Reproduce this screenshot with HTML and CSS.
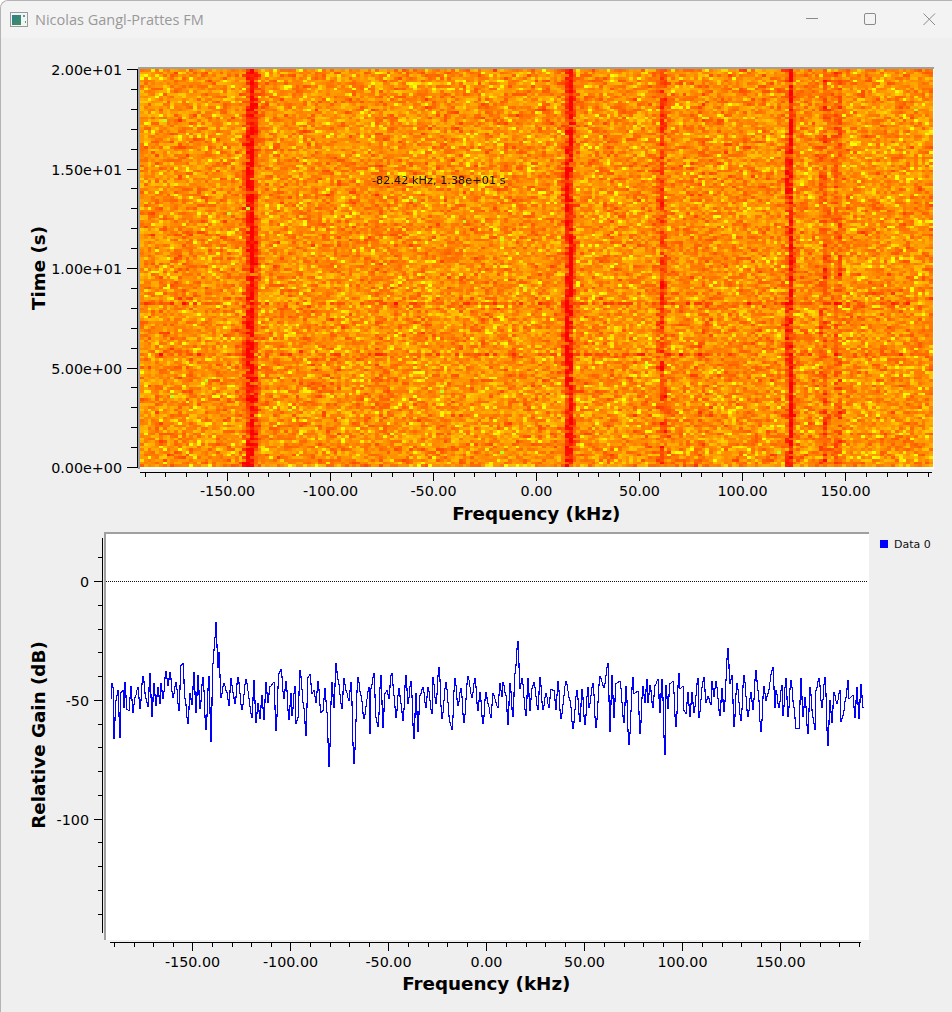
FILE: index.html
```html
<!DOCTYPE html>
<html lang="en">
<head>
  <meta charset="UTF-8" />
  <title>Nicolas Gangl-Prattes FM</title>
  <link rel="stylesheet" href="styles.css">
</head>
<body>
  <div class="window">
    <div class="titlebar">
      <svg class="app-icon" width="18" height="15" viewBox="0 0 18 15">
        <defs>
          <linearGradient id="iconFill" x1="0" y1="0" x2="1" y2="1">
            <stop offset="0" stop-color="#2f7f8f" />
            <stop offset="1" stop-color="#3f8f5f" />
          </linearGradient>
        </defs>
        <rect x="0.5" y="0.5" width="17" height="14" fill="#f4f4f4" stroke="#9a9a9a" />
        <rect x="2" y="3" width="9" height="10" fill="url(#iconFill)" />
        <rect x="13" y="3" width="2" height="2" fill="#4fa0b0" />
        <rect x="15" y="9" width="1" height="2" fill="#3fae7f" />
      </svg>
      <span class="title-text">Nicolas Gangl-Prattes FM</span>
      <div class="controls">
        <svg width="14" height="14" viewBox="0 0 14 14"><path d="M1 6.5H13" class="ctl" /></svg>
        <svg width="14" height="14" viewBox="0 0 14 14"><rect x="1.5" y="1.5" width="11" height="11" rx="1.5" class="ctl" /></svg>
        <svg class="ctl-close" width="14" height="14" viewBox="0 0 14 14"><path d="M1.5 1.5L13 13M13 1.5L1.5 13" class="ctl" /></svg>
      </div>
    </div>

    <div class="plot plot-top">
      <svg id="top-y" class="axis-y"></svg>
      <div class="frame">
        <canvas id="waterfall" width="793" height="398"></canvas>
        <span class="cursor-label">-82.42 kHz, 1.38e+01 s</span>
      </div>
      <svg id="top-x" class="axis-x"></svg>
    </div>

    <div class="plot plot-bottom">
      <svg id="bottom-y" class="axis-y"></svg>
      <div class="frame">
        <svg id="trace" class="trace"></svg>
      </div>
      <div class="legend">
        <span class="swatch"></span>
        <span>Data 0</span>
      </div>
      <svg id="bottom-x" class="axis-x"></svg>
    </div>
  </div>

  <script src="script.js"></script>
</body>
</html>
```

FILE: styles.css
```css
* {
  box-sizing: border-box;
}
html, body {
  margin: 0;
  height: 100%;
  background: #fff;
}
body {
  font-family: "DejaVu Sans", sans-serif;
  overflow: hidden;
}
.window {
  height: 1012px;
  background: #efefef;
  border-top: 1px solid #b4b4b4;
  border-left: 1px solid #b4b4b4;
  border-top-left-radius: 8px;
}
.titlebar {
  height: 37px;
  display: flex;
  align-items: center;
  padding-left: 9px;
  background: #f3f3f3;
  border-top-left-radius: 8px;
}
.app-icon {
  margin-right: 7px;
}
.title-text {
  font-family: "Open Sans", sans-serif;
  font-size: 14.5px;
  color: #999;
}
.controls {
  margin-left: auto;
  margin-bottom: 2px;
  display: flex;
  gap: 44px;
  padding-right: 16px;
  margin-right: 1px;
}
.ctl-close {
  margin-left: 1px;
  margin-right: -1px;
}
.ctl {
  fill: none;
  stroke: #8a8a8a;
  stroke-width: 1;
}

.plot {
  display: grid;
}
.plot-top {
  grid-template-columns: 137px 796px;
  grid-template-rows: 402px 63px;
  padding-top: 29px;
}
.plot-bottom {
  grid-template-columns: 103px 765px 1fr;
  grid-template-rows: 408px 60px;
}
.axis-y {
  width: 100%;
  height: 100%;
  overflow: visible;
}
.axis-x {
  grid-column: 2;
  width: 100%;
  height: 100%;
  overflow: visible;
}
.frame {
  position: relative;
  background: #fff;
  border-top: 2px solid #a0a0a0;
  border-left: 2px solid #a0a0a0;
}
#waterfall {
  display: block;
}
.cursor-label {
  position: absolute;
  left: 232px;
  top: 105px;
  font-size: 11.3px;
  line-height: 14px;
  color: #111;
  white-space: nowrap;
}
.trace {
  display: block;
  width: 100%;
  height: 100%;
}
.legend {
  display: flex;
  align-items: center;
  gap: 6px;
  height: 24px;
  padding-left: 11px;
  font-size: 11px;
  color: #111;
}
.swatch {
  width: 8px;
  height: 8px;
  background: #0000ff;
}

.tick {
  stroke: #000;
  stroke-width: 1;
  shape-rendering: crispEdges;
}
.tick-label {
  font-size: 14.3px;
  fill: #000;
}
.axis-title {
  font-size: 18.3px;
  font-weight: bold;
  fill: #000;
  text-anchor: middle;
}
.zero-line {
  stroke: #111;
  stroke-width: 1;
  stroke-dasharray: 1 1;
  shape-rendering: crispEdges;
}
.curve {
  fill: none;
  stroke: #0000ff;
  stroke-width: 1.1;
  stroke-linejoin: miter;
  shape-rendering: crispEdges;
}
```

FILE: script.js
```js
const SVG_NS = 'http://www.w3.org/2000/svg';

function add(parent, tag, attrs, text) {
  const el = document.createElementNS(SVG_NS, tag);
  for (const k in attrs) el.setAttribute(k, attrs[k]);
  if (text !== undefined) el.textContent = text;
  parent.appendChild(el);
  return el;
}

function line(svg, x1, y1, x2, y2) {
  add(svg, 'line', { x1, y1, x2, y2, class: 'tick' });
}

// all positions below are page pixels, ox/oy is where the svg sits on the page
function drawAxisX(id, ox, oy, a) {
  const svg = document.getElementById(id);
  line(svg, a.from - ox, a.y - oy, a.to - ox, a.y - oy);
  for (let f = -190; f <= 190; f += 10) {
    const x = Math.round(a.zero + f * a.scale) - ox + 0.5;
    const major = f % 50 === 0;
    line(svg, x, a.y - oy, x, a.y - oy + (major ? 9 : 5));
    if (major) {
      add(svg, 'text', { x, y: a.labelY - oy, class: 'tick-label', 'text-anchor': 'middle' }, f.toFixed(2));
    }
  }
  add(svg, 'text', { x: a.zero - ox, y: a.titleY - oy, class: 'axis-title' }, 'Frequency (kHz)');
}

function drawAxisY(id, oy, a) {
  const svg = document.getElementById(id);
  line(svg, a.x - 1, a.top - oy, a.x - 1, a.bottom - oy);
  a.ticks.forEach(t => {
    const y = Math.round(t.y) - oy + 0.5;
    line(svg, a.x - 1 - (t.label !== undefined ? a.major : a.minor), y, a.x - 1, y);
    if (t.label !== undefined) {
      add(svg, 'text', { x: a.labelX, y: y + 5, class: 'tick-label', 'text-anchor': 'end' }, t.label);
    }
  });
  add(svg, 'text', {
    x: 44, y: a.titleY - oy, class: 'axis-title',
    transform: `rotate(-90 44 ${a.titleY - oy})`
  }, a.title);
}

function sciLabel(s) {
  // 5 -> 5.00e+00, 15 -> 1.50e+01
  return s.toExponential(2).replace(/e\+(\d)$/, 'e+0$1');
}

// top plot axes
const timeTicks = [];
for (let s = 0; s <= 20; s++) {
  const t = { y: 467 - s * 19.9 };
  if (s % 5 === 0) t.label = sciLabel(s);
  timeTicks.push(t);
}
drawAxisY('top-y', 67, {
  x: 137, top: 69, bottom: 468, major: 10, minor: 6, labelX: 121,
  ticks: timeTicks, title: 'Time (s)', titleY: 268
});
drawAxisX('top-x', 138, 469, {
  zero: 536.3, scale: 2.06, from: 140, to: 932, y: 472, labelY: 496, titleY: 520
});

// bottom plot axes
const gainTicks = [];
for (let d = 10; d >= -140; d -= 10) {
  const t = { y: 581 + (-d) * 2.375 };
  if (d % 50 === 0) t.label = String(d);
  gainTicks.push(t);
}
drawAxisY('bottom-y', 532, {
  x: 102, top: 538, bottom: 933, major: 8, minor: 4, labelX: 88,
  ticks: gainTicks, title: 'Relative Gain (dB)', titleY: 735
});
drawAxisX('bottom-x', 104, 940, {
  zero: 486.3, scale: 1.96, from: 110, to: 861, y: 942, labelY: 967, titleY: 990
});

// seeded noise so every run gives the same picture
let seed = 20240611;
function rnd() {
  seed = (seed + 0x6D2B79F5) | 0;
  let t = Math.imul(seed ^ (seed >>> 15), 1 | seed);
  t = (t + Math.imul(t ^ (t >>> 7), 61 | t)) ^ t;
  return ((t ^ (t >>> 14)) >>> 0) / 4294967296;
}

const STOPS = [
  [0.00, 255, 0, 0],
  [0.28, 255, 90, 0],
  [0.48, 255, 145, 0],
  [0.68, 255, 200, 0],
  [0.82, 255, 255, 0],
  [0.93, 170, 255, 40],
  [1.00, 40, 255, 190]
];

function colorFor(v) {
  v = Math.max(0, Math.min(1, v));
  for (let i = 1; i < STOPS.length; i++) {
    if (v <= STOPS[i][0]) {
      const a = STOPS[i - 1], b = STOPS[i];
      const k = (v - a[0]) / (b[0] - a[0]);
      return `rgb(${a[1] + (b[1] - a[1]) * k | 0},${a[2] + (b[2] - a[2]) * k | 0},${a[3] + (b[3] - a[3]) * k | 0})`;
    }
  }
  return 'rgb(255,0,0)';
}

function drawWaterfall() {
  const ctx = document.getElementById('waterfall').getContext('2d');
  const cols = 209, rows = 150;
  const cw = 793 / cols, ch = 398 / rows;
  // page x of the carriers, half width in px, how deep they pull the colour
  const carriers = [
    [251, 5.5, 0.5], [569, 4.2, 0.52], [662, 4, 0.28], [790, 3, 0.5],
    [824, 3.5, 0.2], [838, 3.5, 0.18], [380, 4, 0.07], [180, 10, 0.04], [700, 10, 0.04]
  ];
  const rowDip = { 88: 0.18, 107: 0.18 };
  for (let r = 0; r < rows; r++) {
    let prev = 0;
    const wobble = Math.sin(r / 9) * 1.5;
    for (let c = 0; c < cols; c++) {
      const x = 140 + (c + 0.5) * cw;
      const n = (rnd() + rnd() + rnd() - 1.5) * 0.2;
      const smear = n + prev * 0.2;
      prev = n;
      let v = 0.46 + smear;
      if (rnd() < 0.14) v += 0.24;
      carriers.forEach(([cx, w, depth]) => {
        const d = (x - cx - wobble) / w;
        v -= depth * Math.exp(-d * d);
      });
      if (rowDip[r] && x < 910 && rnd() < 0.7) v -= rowDip[r];
      v = Math.min(v, 0.83);
      if (rnd() < 0.0005) v = 0.92;
      ctx.fillStyle = colorFor(v);
      const x0 = Math.round(c * cw), y0 = Math.round(r * ch);
      ctx.fillRect(x0, y0, Math.round((c + 1) * cw) - x0, Math.round((r + 1) * ch) - y0);
    }
  }
}
drawWaterfall();

// spectrum, read off the plot in three stretches: x, y at 3x with an offset
const STRETCHES = [
  { ox: 100, pts: [30,265,33,218,37,232,40,385,44,270,52,240,56,380,60,245,66,240,68,290,72,215,78,298,84,300,90,228,95,305,103,262,110,232,118,295,126,198,135,265,140,288,147,190,152,318,158,218,165,285,172,230,176,280,180,218,186,265,195,182,200,225,208,185,216,262,226,215,234,300,240,165,245,160,252,265,260,340,268,248,272,282,280,185,285,305,291,195,296,295,305,200,314,358,323,198,329,392,335,160,341,80,345,35,350,170,355,125,361,262,370,220,378,245,385,285,390,205,396,245,402,280,410,200,424,298,434,208,452,322,459,210,465,335,470,280,476,325,484,255,490,328,495,215,500,275,508,228,518,215,524,360,535,190,541,176,548,265,556,212,563,328,570,250,574,315,582,228,586,340,592,320,597,180,608,295,616,375,620,200,628,192,634,250,640,240,646,275,650,212,660,305,666,300,672,235,678,305,684,467,692,215,698,290,705,160,712,208,722,295,730,205,736,240,745,270,750,215,758,460,770,200,780,255,790,325,803,230,808,370] },
  { ox: 370, pts: [0,235,8,190,14,320,22,348,30,195,37,352,42,250,48,240,55,265,60,195,64,190,70,255,76,320,84,235,90,280,97,330,105,195,110,280,120,212,128,385,135,250,140,362,148,255,155,230,164,290,172,232,182,310,187,202,196,280,204,172,214,325,224,215,238,335,244,358,252,205,262,285,270,235,280,335,292,198,302,262,312,205,322,300,327,245,337,340,345,245,352,280,360,322,366,250,380,290,386,218,392,258,396,215,404,255,411,342,417,218,425,318,432,190,440,92,446,235,452,205,464,315,470,205,478,300,484,235,490,215,500,296,506,202,516,296,526,248,535,292,540,238,548,240,556,296,560,214,570,325,584,212,596,270,606,355,618,240,628,332,634,238,642,342,650,232,655,290,665,218,676,350,688,198,700,230,710,158,718,362,722,195,728,320,736,218,748,212,760,335,766,228,775,402] },
  { ox: 630, pts: [5,202,10,250,20,242,27,368,35,228,42,275,47,208,52,275,56,225,65,292,73,225,80,208,88,305,92,208,102,432,106,225,112,295,118,218,126,214,136,347,144,190,148,235,155,228,160,300,166,310,170,245,178,318,184,245,190,305,200,205,205,322,215,212,220,200,225,275,232,258,240,282,244,214,248,258,256,212,267,315,272,235,280,302,290,115,296,220,302,195,310,347,317,218,331,330,340,196,352,318,360,245,366,298,374,180,382,240,389,363,398,228,406,270,412,250,422,180,427,172,432,290,436,240,445,292,452,225,456,315,466,205,470,318,480,210,490,290,496,355,503,355,510,205,516,318,522,262,530,368,537,232,545,322,551,358,556,240,564,205,572,290,582,202,591,405,598,270,602,337,610,245,618,280,626,240,630,333,636,315,645,260,650,210,655,265,665,255,672,320,678,232,684,325,690,222,695,290] }
];

function drawTrace() {
  const svg = document.getElementById('trace');
  // svg sits at page (106, 534)
  add(svg, 'line', { x1: 0, y1: 47.5, x2: 762, y2: 47.5, class: 'zero-line' });
  const coords = [];
  STRETCHES.forEach(s => {
    for (let i = 0; i < s.pts.length; i += 2) {
      const x = Math.round(s.ox + s.pts[i] / 3 - 106) + 0.5;
      const y = Math.round(610 + s.pts[i + 1] / 3 - 534) + 0.5;
      // one pixel of flat top at each extreme, then a steep edge to the next
      coords.push(x + ',' + y, (x + 1) + ',' + y);
    }
  });
  add(svg, 'polyline', { points: coords.join(' '), class: 'curve' });
}
drawTrace();
```
